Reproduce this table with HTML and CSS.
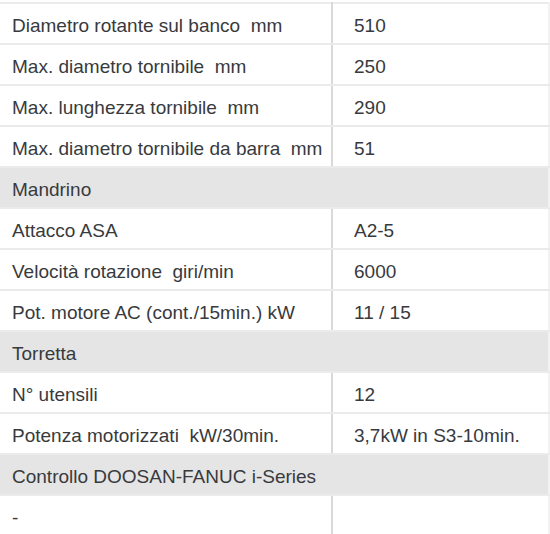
FILE: index.html
```html
<!DOCTYPE html>
<html lang="it">
<head>
<meta charset="utf-8">
<title>Scheda tecnica</title>
<link rel="stylesheet" href="styles.css">
</head>
<body>
<table class="specs">
  <tbody>
    <tr><td class="k">Diametro rotante sul banco&nbsp; mm</td><td class="v">510</td></tr>
    <tr><td class="k">Max. diametro tornibile&nbsp; mm</td><td class="v">250</td></tr>
    <tr><td class="k">Max. lunghezza tornibile&nbsp; mm</td><td class="v">290</td></tr>
    <tr><td class="k">Max. diametro tornibile da barra&nbsp; mm</td><td class="v">51</td></tr>
    <tr class="group"><td colspan="2">Mandrino</td></tr>
    <tr><td class="k">Attacco ASA</td><td class="v">A2-5</td></tr>
    <tr><td class="k">Velocità rotazione&nbsp; giri/min</td><td class="v">6000</td></tr>
    <tr><td class="k">Pot. motore AC (cont./15min.) kW</td><td class="v">11 / 15</td></tr>
    <tr class="group"><td colspan="2">Torretta</td></tr>
    <tr><td class="k">N° utensili</td><td class="v">12</td></tr>
    <tr><td class="k">Potenza motorizzati&nbsp; kW/30min.</td><td class="v">3,7kW in S3-10min.</td></tr>
    <tr class="group"><td colspan="2">Controllo DOOSAN-FANUC i-Series</td></tr>
    <tr><td class="k">-</td><td class="v"></td></tr>
  </tbody>
</table>
</body>
</html>
```
FILE: styles.css
```css
html, body {
  margin: 0;
  padding: 0;
  background: #ffffff;
}
body {
  padding-top: 2px;
  overflow: hidden;
}
.specs {
  border-collapse: collapse;
  width: 550px;
  table-layout: fixed;
  font-family: "Liberation Sans", Arial, sans-serif;
  font-size: 19px;
  color: #383a3d;
}
.specs tr {
  height: 41px;
}
.specs td {
  border-top: 2px solid #ebebeb;
  border-bottom: 2px solid #ebebeb;
  padding: 5px 0 0 12px;
  height: 39px;
  box-sizing: border-box;
  vertical-align: middle;
  white-space: nowrap;
}
.specs td.k {
  width: 332px;
  border-right: 2px solid #d9d9d9;
}
.specs td.v {
  padding-left: 21px;
  border-right: 2px solid #f2f2f2;
}
.specs tr.group td {
  background: #e5e5e5;
  border-right: 2px solid #f2f2f2;
}
```
